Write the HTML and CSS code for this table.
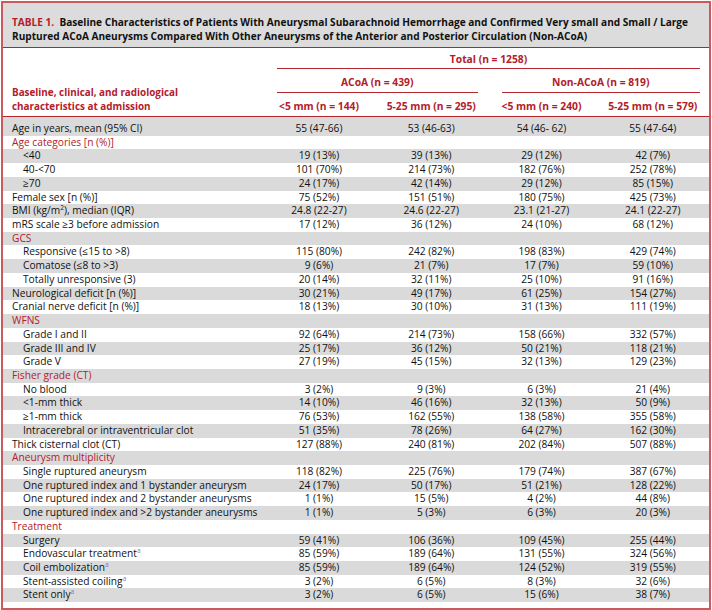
FILE: index.html
```html
<!DOCTYPE html>
<html>
<head>
<meta charset="utf-8">
<link rel="stylesheet" href="styles.css">
</head>
<body>
<div class="frame">
  <div class="title">
    <div class="tline"><span class="tnum">TABLE 1.</span>&nbsp; <span class="ttext">Baseline Characteristics of Patients With Aneurysmal Subarachnoid Hemorrhage and Confirmed Very small and Small / Large</span></div>
    <div class="tline">Ruptured ACoA Aneurysms Compared With Other Aneurysms of the Anterior and Posterior Circulation (Non-ACoA)</div>
  </div>
  <div class="thead">
    <div class="hlabel">Baseline, clinical, and radiological<br>characteristics at admission</div>
    <div class="htotal"><div class="uline">Total (n = 1258)</div></div>
    <div class="hgrp g1"><div class="uline">ACoA (n = 439)</div></div>
    <div class="hgrp g2"><div class="uline">Non-ACoA (n = 819)</div></div>
    <div class="hcol">&lt;5 mm (n = 144)</div>
    <div class="hcol">5-25 mm (n = 295)</div>
    <div class="hcol">&lt;5 mm (n = 240)</div>
    <div class="hcol">5-25 mm (n = 579)</div>
  </div>
  <div class="tbody">
    <div class="row first"><div class="lbl">Age in years, mean (95% CI)</div><div class="v">55 (47-66)</div><div class="v">53 (46-63)</div><div class="v">54 (46- 62)</div><div class="v">55 (47-64)</div></div>
    <div class="row"><div class="lbl sec">Age categories [n (%)]</div><div class="v"></div><div class="v"></div><div class="v"></div><div class="v"></div></div>
    <div class="row"><div class="lbl sub">&lt;40</div><div class="v">19 (13%)</div><div class="v">39 (13%)</div><div class="v">29 (12%)</div><div class="v">42 (7%)</div></div>
    <div class="row"><div class="lbl sub">40-&lt;70</div><div class="v">101 (70%)</div><div class="v">214 (73%)</div><div class="v">182 (76%)</div><div class="v">252 (78%)</div></div>
    <div class="row"><div class="lbl sub">≥70</div><div class="v">24 (17%)</div><div class="v">42 (14%)</div><div class="v">29 (12%)</div><div class="v">85 (15%)</div></div>
    <div class="row"><div class="lbl">Female sex [n (%)]</div><div class="v">75 (52%)</div><div class="v">151 (51%)</div><div class="v">180 (75%)</div><div class="v">425 (73%)</div></div>
    <div class="row"><div class="lbl">BMI (kg/m<sup class="sq">2</sup>), median (IQR)</div><div class="v">24.8 (22-27)</div><div class="v">24.6 (22-27)</div><div class="v">23.1 (21-27)</div><div class="v">24.1 (22-27)</div></div>
    <div class="row"><div class="lbl">mRS scale ≥3 before admission</div><div class="v">17 (12%)</div><div class="v">36 (12%)</div><div class="v">24 (10%)</div><div class="v">68 (12%)</div></div>
    <div class="row"><div class="lbl sec">GCS</div><div class="v"></div><div class="v"></div><div class="v"></div><div class="v"></div></div>
    <div class="row"><div class="lbl sub">Responsive (≤15 to &gt;8)</div><div class="v">115 (80%)</div><div class="v">242 (82%)</div><div class="v">198 (83%)</div><div class="v">429 (74%)</div></div>
    <div class="row"><div class="lbl sub">Comatose (≤8 to &gt;3)</div><div class="v">9 (6%)</div><div class="v">21 (7%)</div><div class="v">17 (7%)</div><div class="v">59 (10%)</div></div>
    <div class="row"><div class="lbl sub">Totally unresponsive (3)</div><div class="v">20 (14%)</div><div class="v">32 (11%)</div><div class="v">25 (10%)</div><div class="v">91 (16%)</div></div>
    <div class="row"><div class="lbl">Neurological deficit [n (%)]</div><div class="v">30 (21%)</div><div class="v">49 (17%)</div><div class="v">61 (25%)</div><div class="v">154 (27%)</div></div>
    <div class="row"><div class="lbl">Cranial nerve deficit [n (%)]</div><div class="v">18 (13%)</div><div class="v">30 (10%)</div><div class="v">31 (13%)</div><div class="v">111 (19%)</div></div>
    <div class="row"><div class="lbl sec">WFNS</div><div class="v"></div><div class="v"></div><div class="v"></div><div class="v"></div></div>
    <div class="row"><div class="lbl sub">Grade I and II</div><div class="v">92 (64%)</div><div class="v">214 (73%)</div><div class="v">158 (66%)</div><div class="v">332 (57%)</div></div>
    <div class="row"><div class="lbl sub">Grade III and IV</div><div class="v">25 (17%)</div><div class="v">36 (12%)</div><div class="v">50 (21%)</div><div class="v">118 (21%)</div></div>
    <div class="row"><div class="lbl sub">Grade V</div><div class="v">27 (19%)</div><div class="v">45 (15%)</div><div class="v">32 (13%)</div><div class="v">129 (23%)</div></div>
    <div class="row"><div class="lbl sec">Fisher grade (CT)</div><div class="v"></div><div class="v"></div><div class="v"></div><div class="v"></div></div>
    <div class="row"><div class="lbl sub">No blood</div><div class="v">3 (2%)</div><div class="v">9 (3%)</div><div class="v">6 (3%)</div><div class="v">21 (4%)</div></div>
    <div class="row"><div class="lbl sub">&lt;1-mm thick</div><div class="v">14 (10%)</div><div class="v">46 (16%)</div><div class="v">32 (13%)</div><div class="v">50 (9%)</div></div>
    <div class="row"><div class="lbl sub">≥1-mm thick</div><div class="v">76 (53%)</div><div class="v">162 (55%)</div><div class="v">138 (58%)</div><div class="v">355 (58%)</div></div>
    <div class="row"><div class="lbl sub">Intracerebral or intraventricular clot</div><div class="v">51 (35%)</div><div class="v">78 (26%)</div><div class="v">64 (27%)</div><div class="v">162 (30%)</div></div>
    <div class="row"><div class="lbl">Thick cisternal clot (CT)</div><div class="v">127 (88%)</div><div class="v">240 (81%)</div><div class="v">202 (84%)</div><div class="v">507 (88%)</div></div>
    <div class="row"><div class="lbl sec">Aneurysm multiplicity</div><div class="v"></div><div class="v"></div><div class="v"></div><div class="v"></div></div>
    <div class="row"><div class="lbl sub">Single ruptured aneurysm</div><div class="v">118 (82%)</div><div class="v">225 (76%)</div><div class="v">179 (74%)</div><div class="v">387 (67%)</div></div>
    <div class="row"><div class="lbl sub">One ruptured index and 1 bystander aneurysm</div><div class="v">24 (17%)</div><div class="v">50 (17%)</div><div class="v">51 (21%)</div><div class="v">128 (22%)</div></div>
    <div class="row"><div class="lbl sub">One ruptured index and 2 bystander aneurysms</div><div class="v">1 (1%)</div><div class="v">15 (5%)</div><div class="v">4 (2%)</div><div class="v">44 (8%)</div></div>
    <div class="row"><div class="lbl sub">One ruptured index and &gt;2 bystander aneurysms</div><div class="v">1 (1%)</div><div class="v">5 (3%)</div><div class="v">6 (3%)</div><div class="v">20 (3%)</div></div>
    <div class="row"><div class="lbl sec">Treatment</div><div class="v"></div><div class="v"></div><div class="v"></div><div class="v"></div></div>
    <div class="row"><div class="lbl sub">Surgery</div><div class="v">59 (41%)</div><div class="v">106 (36%)</div><div class="v">109 (45%)</div><div class="v">255 (44%)</div></div>
    <div class="row"><div class="lbl sub">Endovascular treatment<sup class="fn">a</sup></div><div class="v">85 (59%)</div><div class="v">189 (64%)</div><div class="v">131 (55%)</div><div class="v">324 (56%)</div></div>
    <div class="row"><div class="lbl sub">Coil embolization<sup class="fn">a</sup></div><div class="v">85 (59%)</div><div class="v">189 (64%)</div><div class="v">124 (52%)</div><div class="v">319 (55%)</div></div>
    <div class="row"><div class="lbl sub">Stent-assisted coiling<sup class="fn">a</sup></div><div class="v">3 (2%)</div><div class="v">6 (5%)</div><div class="v">8 (3%)</div><div class="v">32 (6%)</div></div>
    <div class="row"><div class="lbl sub">Stent only<sup class="fn">a</sup></div><div class="v">3 (2%)</div><div class="v">6 (5%)</div><div class="v">15 (6%)</div><div class="v">38 (7%)</div></div>
  </div>
</div>
</body>
</html>
```

FILE: styles.css
```css
html, body {
  margin: 0;
  padding: 0;
  background: #ffffff;
}
body {
  padding: 1px 1px 0 1px;
  font-family: "Open Sans", "Liberation Sans", sans-serif;
  color: #111111;
}
.frame {
  width: 706px;
  height: 605px;
  border: 2px solid #c95a5e;
  background: #ffffff;
  overflow: hidden;
}
.title {
  background: #dcdcdc;
  border-bottom: 1px solid #b3262d;
  padding: 12px 9px 3px 9px;
  height: 29px;
  font-size: 10.1px;
  line-height: 14px;
  font-weight: 700;
  color: #111;
}
.tline {
  white-space: nowrap;
}
.tnum {
  color: #b3202a;
}
.thead {
  display: grid;
  grid-template-columns: 259px 114px 110.5px 110px 112.5px;
  grid-template-rows: 21px 24px 23px;
  border-bottom: 1px solid #b3262d;
  color: #b3202a;
  font-weight: 700;
  font-size: 10.3px;
  line-height: 14px;
}
.hlabel {
  grid-column: 1;
  grid-row: 1 / 4;
  align-self: end;
  padding: 0 0 3px 9px;
  line-height: 13.4px;
  font-size: 9.9px;
}
.htotal {
  grid-column: 2 / 6;
  grid-row: 1;
  display: flex;
  flex-direction: column;
  justify-content: flex-end;
}
.hgrp {
  grid-row: 2;
  display: flex;
  flex-direction: column;
  justify-content: flex-end;
}
.g1 { grid-column: 2 / 4; }
.g2 { grid-column: 4 / 6; }
.uline {
  margin: 0 9px 0 15px;
  border-bottom: 1px solid #b3262d;
  text-align: center;
  padding-bottom: 2px;
}
.hgrp .uline {
  padding-bottom: 3px;
}
.hcol {
  grid-row: 3;
  text-align: center;
  padding-top: 6px;
  white-space: nowrap;
}
.tbody {
  display: flex;
  flex-direction: column;
}
.row {
  display: grid;
  grid-template-columns: 259px 114px 110.5px 110px 112.5px;
  height: 13.73px;
  font-size: 10.2px;
  line-height: 13.73px;
  white-space: nowrap;
}
.row:nth-child(odd) {
  background: #dadada;
}
.row.first {
  padding-top: 5px;
}
.lbl {
  padding-left: 9px;
}
.lbl.sub {
  padding-left: 20px;
}
.lbl.sec {
  color: #b3202a;
}
.v {
  text-align: center;
}
.sq {
  font-size: 6.5px;
  line-height: 0;
  vertical-align: 4px;
}
.fn {
  font-size: 6.5px;
  line-height: 0;
  vertical-align: 4px;
  color: #7d7fc4;
}
```
